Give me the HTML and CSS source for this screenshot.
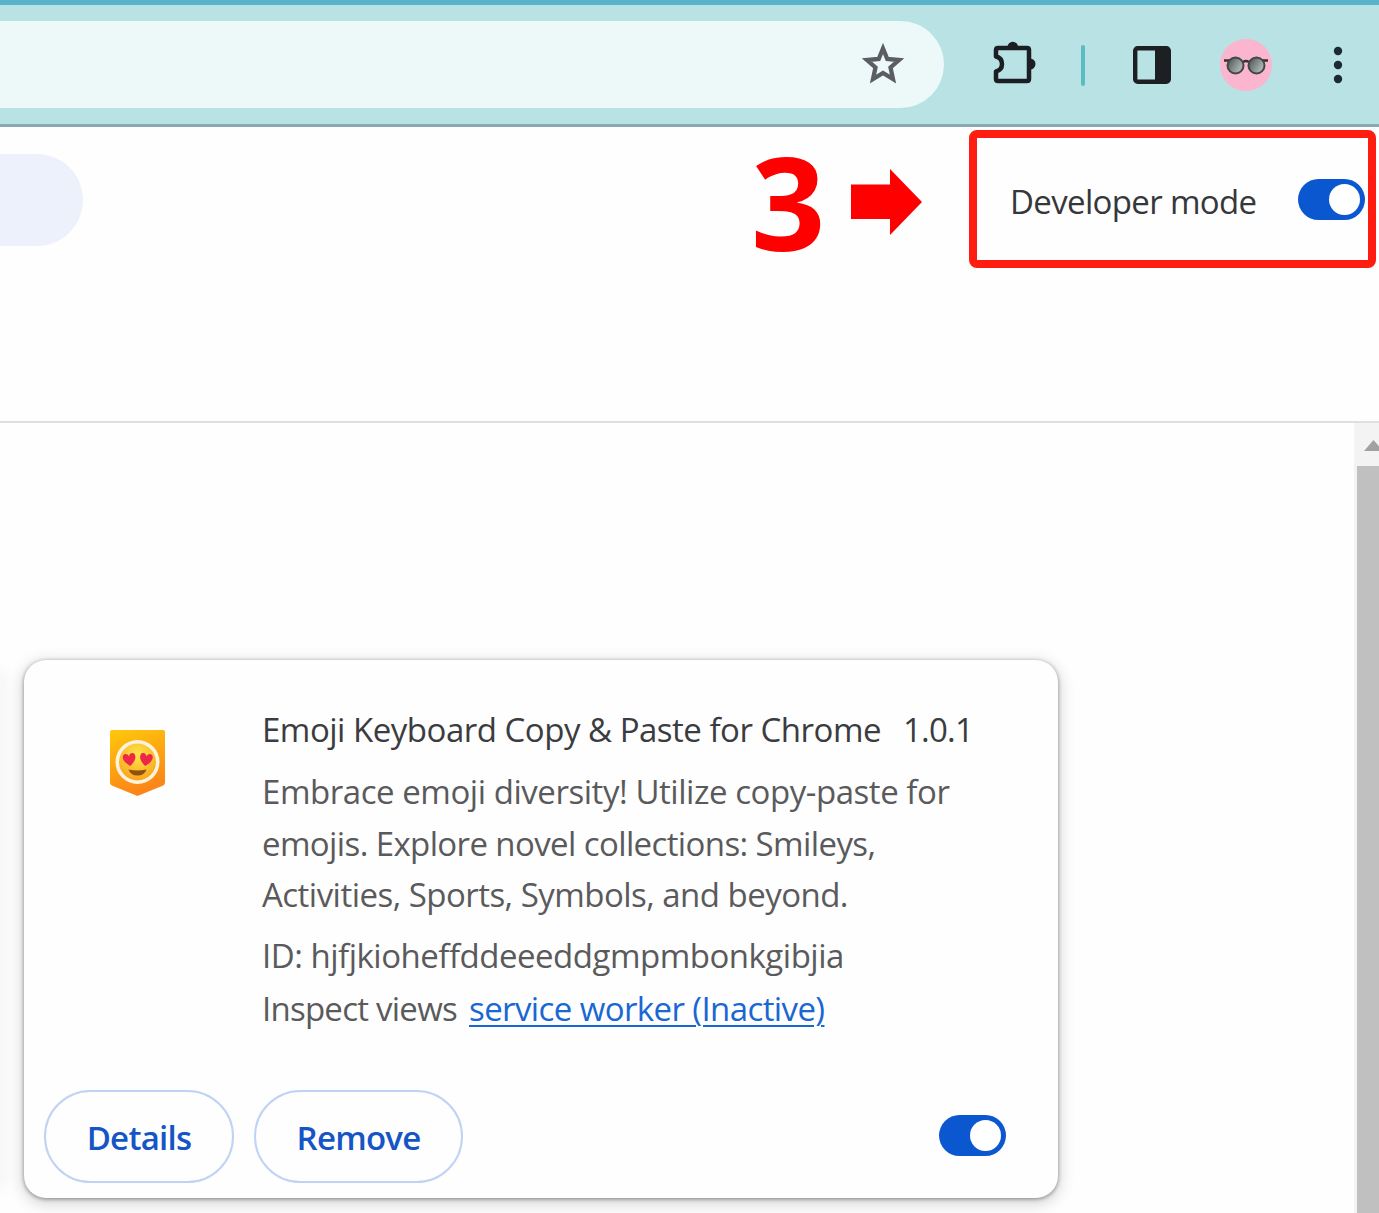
FILE: index.html
```html
<!DOCTYPE html>
<html lang="en">
<head>
<meta charset="utf-8">
<title>Extensions</title>
<link rel="stylesheet" href="styles.css">
</head>
<body>
<div class="toolbar">
  <div class="omnibox">
    <svg class="star" width="42" height="42" viewBox="0 0 42 42"><path d="M21 5.500 L25.300 16 L37 17 L28.500 24.500 L31 36 L21 30 L11 36 L13.500 24.500 L5 17 L16.700 16 Z" fill="none" stroke="#5b5d62" stroke-width="4.300"/></svg>
  </div>
  <svg class="puzzle" width="46" height="46" viewBox="0 0 46 46"><path d="M6 8h29q2 0 2 2v29q0 2-2 2H6q-2 0-2-2V31.500q6-1.500 6-7.500t-6-7.500V10q0-2 2-2Z" fill="none" stroke="#1b1f23" stroke-width="4.500" stroke-linejoin="round"/><path d="M15.500 7a5.300 5.300 0 0 1 10.600 0ZM38 18.500a5.500 5.500 0 0 1 0 11Z" fill="#1b1f23"/></svg>
  <span class="divider"></span>
  <svg class="panel" width="38" height="38" viewBox="0 0 38 38"><rect x="2.200" y="2.200" width="33.600" height="33.600" rx="2.500" fill="none" stroke="#1c2023" stroke-width="4.400"/><path d="M22 2h14v34H22z" fill="#1c2023"/></svg>
  <svg class="avatar" width="52" height="52" viewBox="0 0 52 52">
    <defs><linearGradient id="lens" x1="0" y1="0" x2="1" y2=".6"><stop offset="0" stop-color="#454e50"/><stop offset="1" stop-color="#b5bdbb"/></linearGradient></defs>
    <circle cx="26" cy="26" r="26" fill="#fcb5cf"/>
    <path d="M4 21.500h7M48 21.500h-7M23 23q3-2 6 0" fill="none" stroke="#333" stroke-width="2.500"/>
    <circle cx="15.500" cy="26.500" r="8" fill="url(#lens)" stroke="#454548" stroke-width="2"/>
    <circle cx="36.500" cy="26.500" r="8" fill="url(#lens)" stroke="#454548" stroke-width="2"/>
  </svg>
  <svg class="dots" width="10" height="38" viewBox="0 0 10 38" fill="#1a2a36"><circle cx="5" cy="5" r="4.200"/><circle cx="5" cy="19" r="4.200"/><circle cx="5" cy="33" r="4.200"/></svg>
</div>
<div class="header">
  <div class="search"></div>
  <div class="step">3</div>
  <svg class="arrow" width="71" height="66" viewBox="0 0 71 66"><path d="M0 15.500h39V0L71 33 39 66V50H0z" fill="#fe0000"/></svg>
  <div class="highlight">
    <span class="devmode">Developer mode</span>
    <span class="toggle"></span>
  </div>
</div>
<div class="content">
  <div class="previous"></div>
  <div class="card">
    <div class="info">
      <svg class="logo" width="56" height="68" viewBox="0 0 56 68">
        <defs>
          <linearGradient id="badge" x1="0" y1="0" x2=".3" y2="1"><stop offset="0" stop-color="#ffc90b"/><stop offset="1" stop-color="#fb8518"/></linearGradient>
          <radialGradient id="face" cx=".5" cy=".3" r=".7"><stop offset="0" stop-color="#ffe64a"/><stop offset="1" stop-color="#f8a51c"/></radialGradient>
          <path id="heart" d="M0 5C-4 2-6-1-5-4-4-6-1-6 0-3 1-6 4-6 5-4 6-1 4 2 0 5Z"/>
        </defs>
        <path d="M2 0h51q2 0 2 2v50q0 3-3 4L27.500 66 3 56q-3-1-3-4V2q0-2 2-2Z" fill="url(#badge)"/>
        <circle cx="27.500" cy="32" r="22" fill="#fff3df"/>
        <circle cx="27.500" cy="32" r="18.500" fill="url(#face)"/>
        <use href="#heart" transform="translate(19.500 30) rotate(-8) scale(1.200)" fill="#ee2648"/>
        <use href="#heart" transform="translate(36 30) rotate(8) scale(1.200)" fill="#ee2648"/>
        <path d="M18.500 39.500q9 2 18 0-2 6-9 6t-9-6Z" fill="#92500f"/>
      </svg>
      <div class="text">
        <div class="title"><span class="name">Emoji Keyboard Copy &amp; Paste for Chrome</span><span class="version">1.0.1</span></div>
        <div class="desc"><span class="d1">Embrace emoji diversity! Utilize copy-paste for</span><br><span class="d2">emojis. Explore novel collections: Smileys,</span><br><span class="d3">Activities, Sports, Symbols, and beyond.</span></div>
        <div class="row"><span class="id">ID: hjfjkioheffddeeeddgmpmbonkgibjia</span></div>
        <div class="row views"><span class="inspect">Inspect views</span><a class="link">service worker (Inactive)</a></div>
      </div>
    </div>
    <div class="actions">
      <div class="button details"><span>Details</span></div>
      <div class="button remove"><span>Remove</span></div>
      <span class="toggle"></span>
    </div>
  </div>
  <div class="scrollbar">
    <div class="up"><svg width="17" height="11" viewBox="0 0 17 11"><path d="M0 11 9.500 0 19 11z" fill="#a1a1a1"/></svg></div>
    <div class="thumb"></div>
  </div>
</div>
</body>
</html>
```
FILE: styles.css
```css
* { box-sizing: border-box; }
body {
  margin: 0;
  width: 1379px;
  height: 1213px;
  overflow: hidden;
  background: #fefefe;
  font-family: "Open Sans", "Noto Sans", sans-serif;
  font-size: 33px;
  color: #5a5a5c;
}
svg { display: block; flex: none; }
.toolbar {
  display: flex;
  height: 127px;
  padding-top: 16px;
  border-top: 5px solid #59b3c9;
  border-bottom: 3px solid #87a9b0;
  background: #b8e2e4;
}
.omnibox {
  width: 944px;
  height: 87px;
  padding: 22px 0 0 862px;
  border-radius: 0 44px 44px 0;
  background: #edf8f9;
}
.puzzle { margin: 19px 0 0 48px; }
.divider { width: 4px; height: 41px; margin: 24px 0 0 43px; border-radius: 2px; background: #5dbcc3; }
.panel { margin: 25px 0 0 48px; }
.avatar { margin: 18px 0 0 49px; }
.dots { margin: 25px 0 0 61px; }
.header {
  display: flex;
  height: 296px;
  border-bottom: 2px solid #dfdfe0;
}
.search { width: 83px; height: 92px; margin-top: 27px; border-radius: 0 46px 46px 0; background: #edf1fb; }
.step {
  width: 76px;
  margin: 9px 0 0 668px;
  font: 700 130px/130px "Open Sans", sans-serif;
  color: #fe0000;
}
.arrow { margin: 42px 0 0 24px; }
.highlight {
  display: flex;
  flex: none;
  width: 407px;
  height: 138px;
  margin: 3px 0 0 47px;
  padding: 0 0 0 33px;
  border: 8px solid #ff1c10;
  border-radius: 8px;
}
.devmode { width: 288px; padding-top: 41px; line-height: 46px; letter-spacing: -.65px; color: #36373b; white-space: nowrap; }
.toggle {
  flex: none;
  display: flex;
  justify-content: flex-end;
  width: 67px;
  height: 41px;
  padding: 5px;
  border-radius: 21px;
  background: #0b57d0;
}
.toggle::after { content: ""; width: 31px; height: 31px; border-radius: 50%; background: #fff; }
.highlight .toggle { margin-top: 41px; }
.content { display: flex; height: 790px; overflow: hidden; }
.previous { width: 0; height: 515px; margin-top: 249px; box-shadow: 0 0 14px 3px rgba(0, 0, 0, .08); }
.card {
  width: 1034px;
  height: 538px;
  margin: 237px 0 0 24px;
  border-radius: 22px;
  background: #fefefe;
  box-shadow: 0 1px 4px rgba(0, 0, 0, .42), 0 4px 16px 2px rgba(0, 0, 0, .16);
}
.info { display: flex; height: 430px; padding: 70px 0 0 86px; }
.text { margin: -25px 0 0 96px; white-space: nowrap; }
.title { display: flex; height: 60px; line-height: 50px; color: #3b3c40; }
.name { width: 641px; letter-spacing: -.49px; }
.version { letter-spacing: -.8px; }
.desc { height: 164px; margin-top: 1px; line-height: 51.700px; }
.d1 { letter-spacing: -.45px; }
.d2 { letter-spacing: -.61px; }
.d3 { letter-spacing: -.53px; }
.id { letter-spacing: -.49px; }
.row { height: 53px; line-height: 51px; }
.views { display: flex; }
.inspect { width: 207px; letter-spacing: -.75px; }
.link { letter-spacing: -.6px; color: #1967d2; text-decoration: underline; text-decoration-thickness: 2px; text-underline-offset: 4px; }
.actions { display: flex; padding-left: 20px; }
.button {
  display: flex;
  align-items: center;
  justify-content: center;
  height: 93px;
  padding-top: 2px;
  border: 2px solid #bfd3f5;
  border-radius: 47px;
  color: #1555c5;
  font-weight: 550;
  letter-spacing: -.75px;
}
.details { width: 190px; }
.remove { width: 209px; margin-left: 20px; }
.actions .toggle { margin: 25px 0 0 476px; }
.scrollbar { flex: none; width: 25px; margin-left: 296px; background: #f3f3f3; }
.up { height: 43px; padding: 17px 0 0 10px; }
.thumb { height: 747px; margin-left: 3px; background: #c0c0c0; }
```
